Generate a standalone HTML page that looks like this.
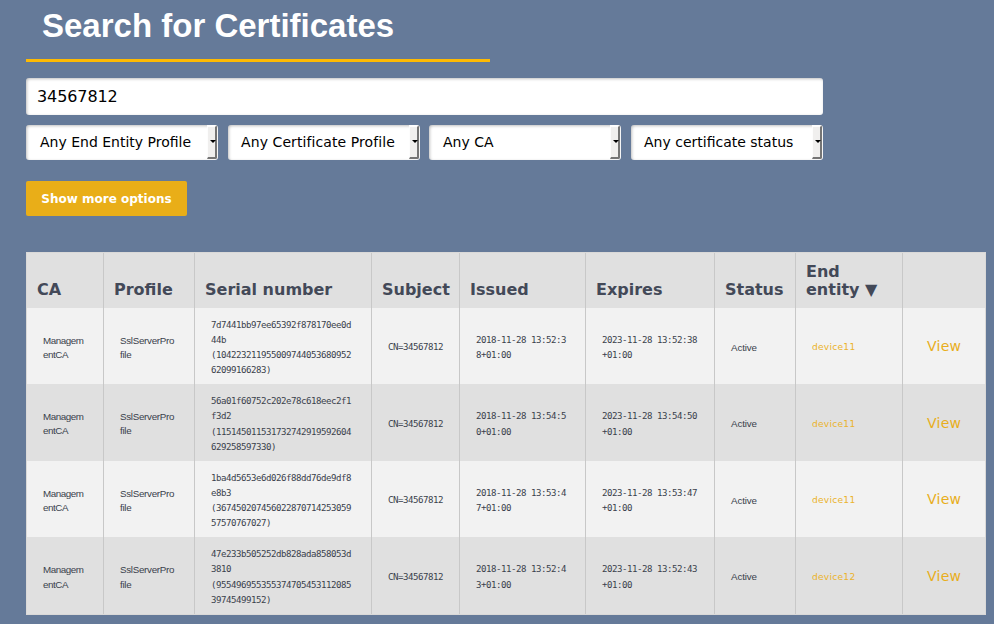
<!DOCTYPE html>
<html lang="en">
<head>
<meta charset="utf-8">
<title>Search for Certificates</title>
<style>
html,body{margin:0;padding:0;}
body{width:994px;height:624px;overflow:hidden;background:#657a99;position:relative;
  font-family:"DejaVu Sans","Liberation Sans",sans-serif;font-size:13px;color:#3a3f4c;}
h1{position:absolute;left:26px;top:0;width:464px;height:59px;margin:0;box-sizing:content-box;
  border-bottom:3px solid #feba03;
  font-family:"Liberation Sans",sans-serif;font-weight:bold;font-size:33px;line-height:52px;
  color:#fff;padding-left:16px;box-sizing:border-box;height:62px;white-space:nowrap;}
.search{position:absolute;left:26px;top:78px;width:797px;height:37px;background:#fff;border-radius:3px;
  box-sizing:border-box;padding-left:11px;font-size:16px;letter-spacing:-.1px;line-height:37px;color:#000;
  box-shadow:inset 1px 1px 3px rgba(0,0,0,.25);}
.sel{position:absolute;top:125px;height:35px;width:192px;background:#fff;border-radius:3px;box-sizing:border-box;
  padding-left:14px;font-size:14px;line-height:35px;color:#000;white-space:nowrap;overflow:hidden;
  box-shadow:inset 1px 1px 3px rgba(0,0,0,.25);}
.sel i{position:absolute;right:1px;top:0;bottom:1px;width:10px;background:#f0efee;
  border-top:2px solid #fdfdfd;border-left:1px solid #fdfdfd;border-right:2px solid #757575;border-bottom:2px solid #757575;border-radius:0 2px 2px 0;box-sizing:border-box;}
.sel i:after{content:"";position:absolute;left:1.8px;top:13px;border-left:3px solid transparent;border-right:3px solid transparent;border-top:3.6px solid #000;}
.btn{position:absolute;left:26px;top:181px;width:161px;height:35px;background:#e9ae18;border-radius:2px;
  color:#fff;font-weight:bold;font-size:12px;line-height:37px;text-align:center;}
table{position:absolute;left:26px;top:252px;width:960px;border-collapse:separate;border-spacing:0;table-layout:fixed;
  border:1px solid #dad9d8;box-sizing:border-box;}
th,td{box-sizing:border-box;border-right:1px solid #c8c8c8;padding:0;text-align:left;overflow:hidden;}
th:last-child,td:last-child{border-right:0;}
th{background:#e0e0e0;height:55px;vertical-align:bottom;font-weight:bold;font-size:16px;line-height:18px;
  padding:0 0 9px 10px;color:#434958;}
td{vertical-align:middle;font-family:"Liberation Sans",sans-serif;font-size:9.8px;letter-spacing:-0.45px;line-height:14px;
  padding:4px 0 0 16px;color:#3a3f4c;white-space:nowrap;}
tr.a td{background:#f2f2f2;}
tr.b td{background:#e0e0e0;}
tr.r1 td,tr.r3 td{height:76px;}
tr.r2 td,tr.r4 td{height:77px;}
td.m{font-family:"DejaVu Sans Mono","Liberation Mono",monospace;font-size:9.1px;letter-spacing:-0.478px;line-height:15px;padding-top:4px;}
td.m1{padding-top:2px;}
tr.b td:not(.m):not(.e):not(.v){padding-top:3px;}
tr.b td.m{padding-top:3px;}
tr.b td.m1{padding-top:4px;}
.g{margin-top:1px;}
.d{position:relative;top:1px;}
td.s{letter-spacing:-0.15px;}
td.p{letter-spacing:-0.3px;}
td.e{font-family:"DejaVu Sans","Liberation Sans",sans-serif;font-size:9.1px;color:#ebb32c;letter-spacing:.25px;padding-top:2px;}
td.v{font-family:"DejaVu Sans","Liberation Sans",sans-serif;font-size:14px;letter-spacing:.25px;color:#e8ae1b;padding-left:24px;padding-top:0;}
</style>
</head>
<body>
<h1>Search for Certificates</h1>
<div class="search">34567812</div>
<div class="sel" style="left:26px">Any End Entity Profile<i></i></div>
<div class="sel" style="left:228px;padding-left:13px;letter-spacing:.09px">Any Certificate Profile<i></i></div>
<div class="sel" style="left:429px;width:192px">Any CA<i></i></div>
<div class="sel" style="left:631px;padding-left:13px">Any certificate status<i></i></div>
<div class="btn">Show more options</div>
<table>
<colgroup><col style="width:77px"><col style="width:91px"><col style="width:177px"><col style="width:88px"><col style="width:126px"><col style="width:129px"><col style="width:81px"><col style="width:107px"><col style="width:82px"></colgroup>
<thead>
<tr><th>CA</th><th>Profile</th><th>Serial number</th><th>Subject</th><th>Issued</th><th>Expires</th><th>Status</th><th>End<br>entity ▼</th><th></th></tr>
</thead>
<tbody>
<tr class="a r1"><td>Managem<br>entCA</td><td class="p">SslServerPro<br>file</td><td class="m">7d7441bb97ee65392f878170ee0d<br>44b<br>(104223211955009744053680952<br>62099166283)</td><td class="m m1">CN=34567812</td><td class="m">2018-11-28 13:52:3<br>8+01:00</td><td class="m">2023-11-28 13:52:38<br>+01:00</td><td class="s">Active</td><td class="e">device11</td><td class="v">View</td></tr>
<tr class="b r2"><td>Managem<br>entCA</td><td class="p">SslServerPro<br>file</td><td class="m">56a01f60752c202e78c618eec2f1<br>f3d2<div class="g">(115145011531732742919592604<br>629258597330)</div></td><td class="m m1">CN=34567812</td><td class="m">2018-11-28 13:54:5<div class="g">0+01:00</div></td><td class="m">2023-11-28 13:54:50<div class="g">+01:00</div></td><td class="s">Active</td><td class="e">device11</td><td class="v">View</td></tr>
<tr class="a r3"><td>Managem<br>entCA</td><td class="p">SslServerPro<br>file</td><td class="m">1ba4d5653e6d026f88dd76de9df8<br>e8b3<br>(367450207456022870714253059<br>57570767027)</td><td class="m m1">CN=34567812</td><td class="m">2018-11-28 13:53:4<br>7+01:00</td><td class="m">2023-11-28 13:53:47<br>+01:00</td><td class="s">Active</td><td class="e">device11</td><td class="v">View</td></tr>
<tr class="b r4"><td>Managem<br><span class="d">entCA</span></td><td class="p">SslServerPro<br><span class="d">file</span></td><td class="m">47e233b505252db828ada858053d<br>3810<div class="g">(955496955355374705453112085<br>39745499152)</div></td><td class="m m1">CN=34567812</td><td class="m">2018-11-28 13:52:4<div class="g">3+01:00</div></td><td class="m">2023-11-28 13:52:43<div class="g">+01:00</div></td><td class="s">Active</td><td class="e">device12</td><td class="v">View</td></tr>
</tbody>
</table>
</body>
</html>
